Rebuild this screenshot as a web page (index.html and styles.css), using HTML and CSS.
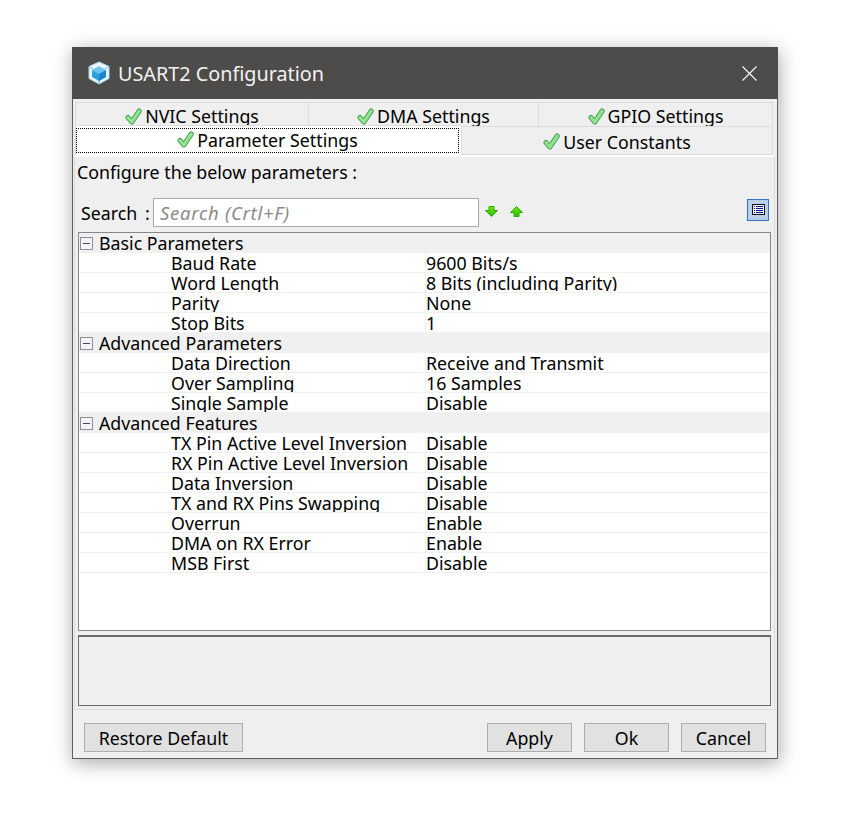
FILE: index.html
```html
<!DOCTYPE html>
<html lang="en">
<head>
    <meta charset="UTF-8">
    <title>USART2 Configuration</title>
    <link rel="stylesheet" href="styles.css">
</head>
<body>
    <svg class="defs" width="0" height="0">
        <defs>
            <linearGradient id="arrow-fill" x1="0" y1="0" x2="0" y2="1">
                <stop offset="0" stop-color="#7fe000"/>
                <stop offset="1" stop-color="#28c000"/>
            </linearGradient>
        </defs>
        <symbol id="check" viewBox="0 0 17 17">
            <path d="M3 9.5 L6.8 14 L14.2 3" fill="none" stroke="#3d9e49" stroke-width="5" stroke-linecap="round" stroke-linejoin="round"/>
            <path d="M3 9.5 L6.8 14 L14.2 3" fill="none" stroke="#93e294" stroke-width="3.2" stroke-linecap="round" stroke-linejoin="round"/>
        </symbol>
    </svg>
    <div class="dialog">
        <div class="titlebar">
            <svg class="logo" width="24" height="24" viewBox="0 0 24 24">
                <path d="M12 1 L22 5.5 L22 17.5 L12 23 L2 17.5 L2 5.5 Z" fill="#eef7fc" stroke="#a8d8f0" stroke-width="1"/>
                <path d="M2 5.5 L6 8 M22 5.5 L18 8 M12 23 L12 19" stroke="#8ccbec" stroke-width="1.4"/>
                <path d="M12 5.5 L19 9.2 L19 16 L12 20 L5 16 L5 9.2 Z" fill="#2f9fe0"/>
                <path d="M12 5.5 L19 9.2 L12 13 L5 9.2 Z" fill="#69c6f2"/>
                <path d="M12 13 L19 9.2 L19 16 L12 20 Z" fill="#1c86cc"/>
            </svg>
            <span class="title">USART2 Configuration</span>
            <svg class="close" width="15" height="15" viewBox="0 0 15 15">
                <path d="M0.5 0.5 L14.5 14.5 M14.5 0.5 L0.5 14.5" stroke="#fff" stroke-width="1.1" fill="none"/>
            </svg>
        </div>

        <div class="tabs">
            <div class="tab-row top">
                <div class="tab nvic"><svg class="check"><use href="#check"/></svg>NVIC Settings</div>
                <div class="tab dma"><svg class="check"><use href="#check"/></svg>DMA Settings</div>
                <div class="tab gpio"><svg class="check"><use href="#check"/></svg>GPIO Settings</div>
            </div>
            <div class="tab-row bottom">
                <div class="tab selected"><span class="focus"><svg class="check"><use href="#check"/></svg>Parameter Settings</span></div>
                <div class="tab user"><svg class="check"><use href="#check"/></svg>User Constants</div>
            </div>
        </div>

        <div class="panel">
            <p class="intro">Configure the below parameters :</p>
            <div class="search-row">
                <label class="search-label">Search :</label>
                <div class="search-input">Search (Crtl+F)</div>
                <svg class="arrow first" width="13" height="11" viewBox="0 0 13 11">
                    <path d="M4 0.5 H9 V4.5 H12.5 L6.5 10.5 L0.5 4.5 H4 Z" fill="url(#arrow-fill)" stroke="#22b000"/>
                </svg>
                <svg class="arrow" width="13" height="11" viewBox="0 0 13 11">
                    <path d="M4 10.5 H9 V6.5 H12.5 L6.5 0.5 L0.5 6.5 H4 Z" fill="url(#arrow-fill)" stroke="#22b000"/>
                </svg>
                <div class="toggle">
                    <svg width="13" height="11" viewBox="0 0 13 11">
                        <rect x="0.5" y="0.5" width="12" height="10" fill="#eef0f6" stroke="#111"/>
                        <path d="M2 2.5 H3 M4 2.5 H11 M2 4.5 H3 M4 4.5 H11 M2 6.5 H3 M4 6.5 H11 M2 8.5 H3 M4 8.5 H11" stroke="#16168c"/>
                    </svg>
                </div>
            </div>

            <div class="tree">
                <div class="group"><span class="minus"></span>Basic Parameters</div>
                <div class="row"><span class="name">Baud Rate</span><span class="value">9600 Bits/s</span></div>
                <div class="row"><span class="name">Word Length</span><span class="value">8 Bits (including Parity)</span></div>
                <div class="row"><span class="name">Parity</span><span class="value">None</span></div>
                <div class="row"><span class="name">Stop Bits</span><span class="value">1</span></div>
                <div class="group"><span class="minus"></span>Advanced Parameters</div>
                <div class="row"><span class="name">Data Direction</span><span class="value">Receive and Transmit</span></div>
                <div class="row"><span class="name">Over Sampling</span><span class="value">16 Samples</span></div>
                <div class="row"><span class="name">Single Sample</span><span class="value">Disable</span></div>
                <div class="group"><span class="minus"></span>Advanced Features</div>
                <div class="row"><span class="name">TX Pin Active Level Inversion</span><span class="value">Disable</span></div>
                <div class="row"><span class="name">RX Pin Active Level Inversion</span><span class="value">Disable</span></div>
                <div class="row"><span class="name">Data Inversion</span><span class="value">Disable</span></div>
                <div class="row"><span class="name">TX and RX Pins Swapping</span><span class="value">Disable</span></div>
                <div class="row"><span class="name">Overrun</span><span class="value">Enable</span></div>
                <div class="row"><span class="name">DMA on RX Error</span><span class="value">Enable</span></div>
                <div class="row"><span class="name">MSB First</span><span class="value">Disable</span></div>
            </div>

            <div class="description"></div>
        </div>

        <div class="footer">
            <button class="btn restore">Restore Default</button>
            <button class="btn apply">Apply</button>
            <button class="btn">Ok</button>
            <button class="btn">Cancel</button>
        </div>
    </div>
</body>
</html>
```

FILE: styles.css
```css
body {
    box-sizing: border-box;
    height: 819px;
    margin: 0;
    padding: 47px 0 0 72px;
    overflow: hidden;
    background-color: #fff;
    font-family: "Noto Sans", "Open Sans", sans-serif;
    font-size: 17.8px;
    color: #000;
}
.defs {
    position: absolute;
}
.dialog {
    box-sizing: border-box;
    width: 706px;
    height: 712px;
    background: #efefef;
    border: 1px solid #5f5f5f;
    border-top: none;
    box-shadow: 1px 4px 18px rgba(0, 0, 0, 0.35);
}
.titlebar {
    display: flex;
    align-items: center;
    height: 52px;
    margin: 0 -1px;
    padding: 0 21px 0 15px;
    background: #4d4c4a;
    color: #f2f2f2;
}
.logo {
    margin-right: 7px;
}
.title {
    flex: 1;
    padding-top: 1px;
    font-size: 19.8px;
}
.tabs {
    padding: 3px 0 0 2px;
    width: 698px;
}
.tab-row {
    display: flex;
}
.tab-row.top {
    height: 23px;
}
.tab-row.bottom {
    height: 30px;
}
.tab {
    box-sizing: border-box;
    display: flex;
    align-items: center;
    justify-content: center;
    overflow: hidden;
    border: 1px solid #dcdcdc;
    border-right: none;
    white-space: nowrap;
}
.tab-row.top .tab {
    height: 26px;
    border-bottom: none;
    padding-top: 1px;
}
.tab.nvic {
    width: 233px;
}
.tab.dma {
    width: 230px;
}
.tab.gpio {
    width: 235px;
    border-right: 1px solid #dcdcdc;
}
.tab.selected {
    position: relative;
    width: 386px;
    height: 30px;
    padding: 2px 2px 2px 0;
    background: #fff;
    border-bottom: none;
}
.focus {
    display: flex;
    flex: 1;
    align-items: center;
    justify-content: center;
    height: 100%;
    box-sizing: border-box;
    padding-bottom: 2px;
    border: 1px dotted #000;
}
.tab.user {
    width: 312px;
    height: 29px;
    margin-top: 1px;
    padding-top: 2px;
    border-right: 1px solid #dcdcdc;
}
.check {
    width: 17px;
    height: 17px;
    margin-right: 3px;
    flex: none;
}
.panel {
    box-sizing: border-box;
    width: 701px;
    height: 555px;
    margin-left: 1px;
    padding: 3px 3px 0 3px;
    border: 1px solid #dcdcdc;
    border-top: 2px solid #fff;
}
.intro {
    margin: 0 0 0 -1px;
    height: 33px;
    line-height: 24px;
}
.search-row {
    display: flex;
    align-items: center;
    height: 29px;
    margin: 5px 0;
}
.search-label {
    width: 75px;
    padding-left: 3px;
    box-sizing: border-box;
    word-spacing: 3px;
}
.search-input {
    box-sizing: border-box;
    width: 326px;
    height: 29px;
    padding-left: 6px;
    line-height: 27px;
    background: #fff;
    border: 1px solid #a9a9a9;
    color: #8a8a8a;
    font-size: 18.5px;
    font-style: italic;
    letter-spacing: 0.7px;
}
.arrow {
    margin: -2px 11px 0 6px;
}
.arrow.first {
    margin: -2px 6px 0 6px;
}
.toggle {
    display: flex;
    align-items: center;
    justify-content: center;
    box-sizing: border-box;
    width: 22px;
    height: 22px;
    margin: -6px 2px 0 auto;
    background: #b9cfee;
    border: 1px solid #3a70c4;
}
.tree {
    box-sizing: border-box;
    height: 399px;
    background: #fff;
    border: 1px solid #85858c;
}
.group {
    display: flex;
    align-items: center;
    height: 20px;
    background: #f0f0f0;
    white-space: nowrap;
    overflow: hidden;
}
.minus {
    position: relative;
    box-sizing: border-box;
    width: 13px;
    height: 13px;
    margin: 0 6px 0 1px;
    border: 1px solid #8a8f9c;
    background: #f4f4f6;
}
.minus::after {
    content: "";
    position: absolute;
    left: 2px;
    right: 2px;
    top: 5px;
    height: 1px;
    background: #3c4a78;
}
.row {
    display: flex;
    box-sizing: border-box;
    height: 20px;
    border-bottom: 1px solid #f0f0f0;
    line-height: 20px;
    white-space: nowrap;
}
.name, .value {
    height: 18px;
    overflow: hidden;
}
.name {
    box-sizing: content-box;
    width: 254px;
    padding-left: 92px;
    padding-bottom: 1px;
    border-right: 1px solid #f0f0f0;
}
.description {
    box-sizing: border-box;
    height: 71px;
    margin-top: 4px;
    border: 1px solid #6b6b6b;
    border-top-width: 2px;
    background: #efefef;
}
.footer {
    display: flex;
    padding: 13px 11px 0;
}
.btn {
    box-sizing: border-box;
    width: 85px;
    height: 29px;
    margin-left: 12px;
    padding: 0;
    font: inherit;
    background: #e1e1e1;
    border: 1px solid #adadad;
    color: #000;
}
.btn.restore {
    width: 159px;
    margin: 0 auto 0 0;
}
```
